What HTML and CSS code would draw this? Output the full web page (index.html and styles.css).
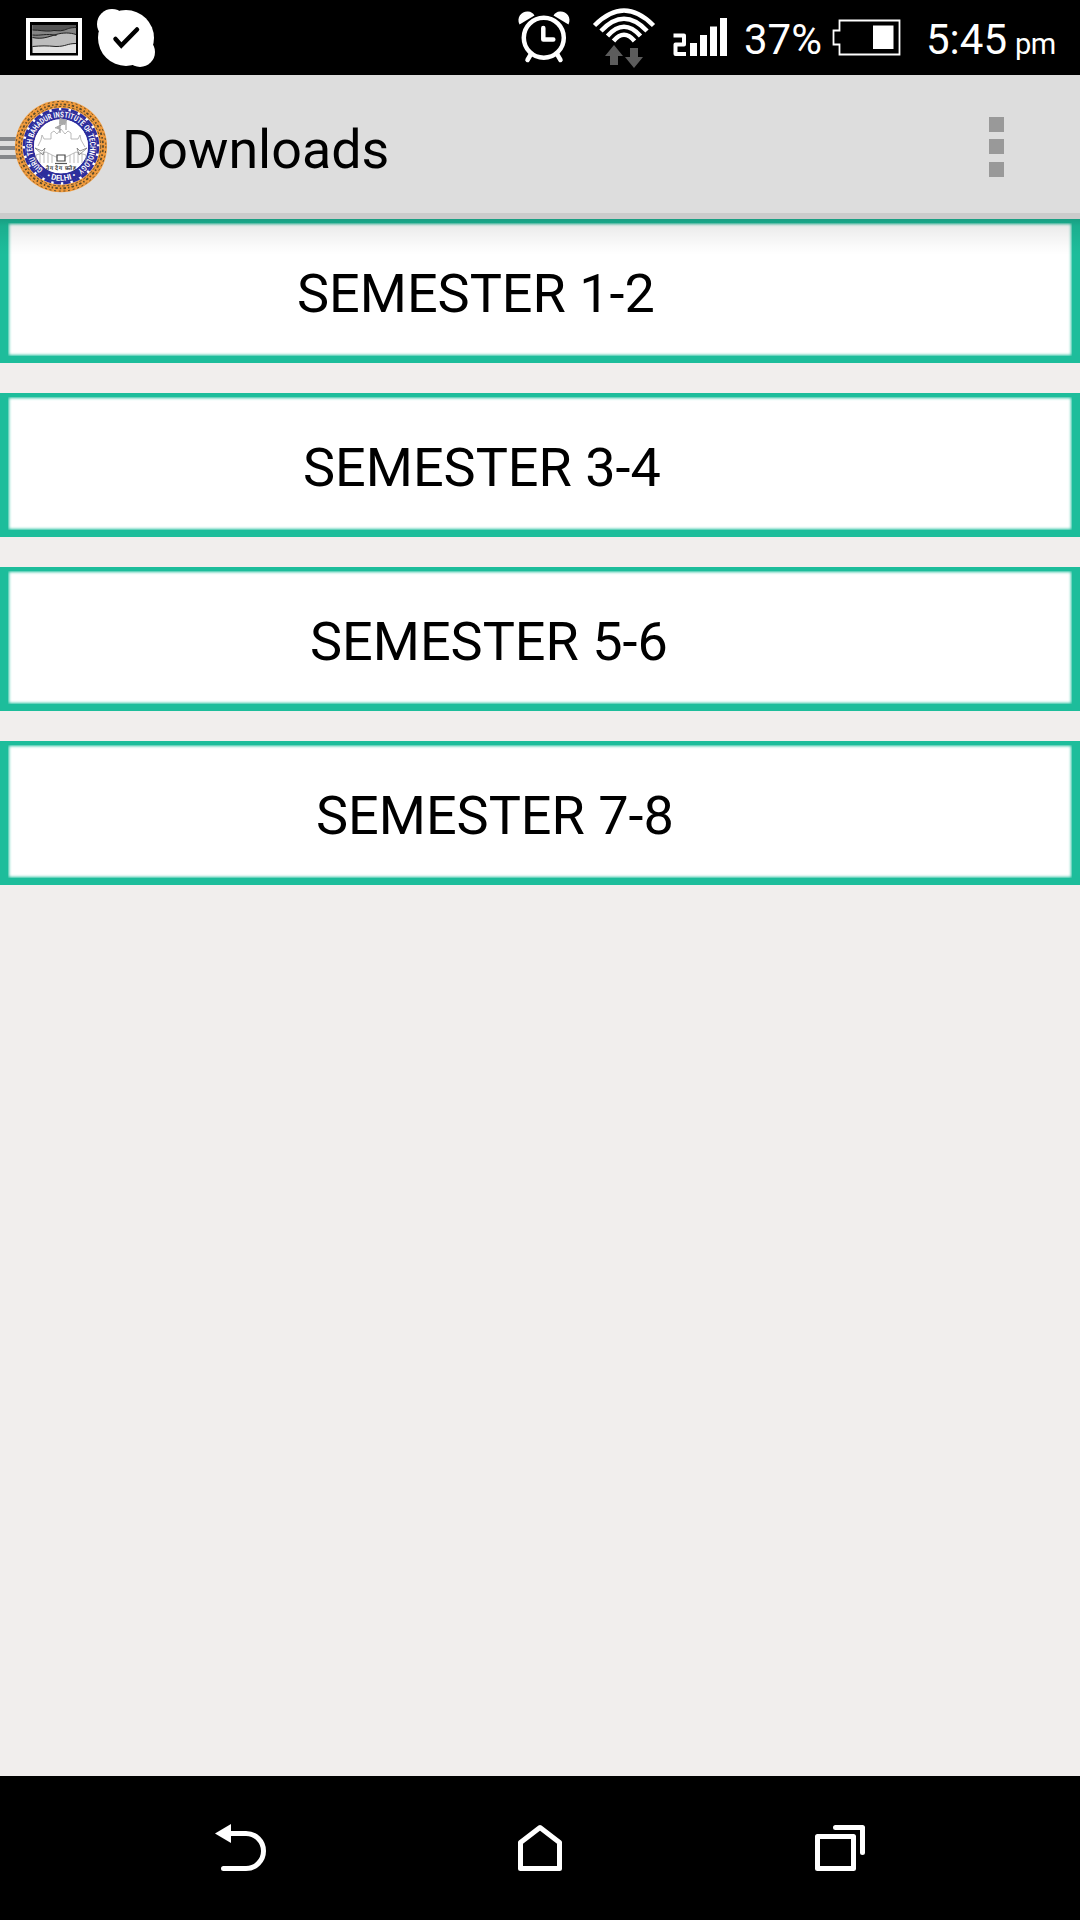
FILE: index.html
```html
<!DOCTYPE html>
<html lang="en">
<head>
<meta charset="utf-8">
<title>Downloads</title>
<link rel="stylesheet" href="styles.css">
</head>
<body>
<div class="screen">
  <header class="status">
    <svg class="notices" width="180" height="75" viewBox="0 0 180 75">
      <path fill="#fff" d="M26 18h56v42H26z"/>
      <path fill="#000" d="M30 22h48v33.500H30z"/>
      <path fill="#e3e3e3" d="M32.500 25H76v28H32.500z"/>
      <path fill="#bdbdbd" d="M32.500 25H76v18.500c-9 0-10 3-20 3-9-.8-14-.8-23.500 0z"/>
      <path fill="#858585" d="M32.500 25H76v9.500c-6-2-13-2-20 .5-8 3-14 4-23.500 3z"/>
      <path fill="#555" d="M32.500 25H76v2.500c-6 0-8 1-12 2.500-6 2-10-.5-14 1-6 .5-11-1-17.500-1z"/>
      <path fill="none" stroke="#222" d="M32.500 30c7 0 12 1.500 18 1 5-1.500 8 1 14-1 4-1.500 6-2.500 12-2.500M32.500 35c8 1 14-2 24 .5M32.500 37.500c10 2 15-.5 23.500-3 7-2 14-2 20 0M32.500 46.500c9-.8 14-.8 23.500 0 10 0 11-3 20-3"/>
      <circle cx="112" cy="24" r="15" fill="#fff"/>
      <circle cx="126" cy="38" r="28" fill="#fff"/>
      <circle cx="140" cy="52" r="15" fill="#fff"/>
      <path fill="none" stroke="#000" stroke-width="4.500" stroke-linecap="round" d="M115.500 39l5.800 6.500L137 29.500"/>
    </svg>
    <div class="indicators">
      <svg width="230" height="75" viewBox="510 0 230 75">
        <g fill="none" stroke="#fff">
          <circle cx="543.800" cy="37.800" r="20" stroke-width="4.500"/>
          <path stroke-width="4.500" stroke-linecap="round" stroke-linejoin="round" d="M543.300 28v11.500h10M531 54l-3.500 6M557 54l3.500 6"/>
        </g>
        <path fill="#fff" d="M519.500 24.500C516 17 522 11 528 11.500c3 .2 5 1.500 6.500 4zM568.500 24.500C572 17 566 11 560 11.500c-3 .2-5 1.500-6.500 4z"/>
        <g fill="none" stroke="#fff" stroke-width="4.500">
          <path d="M594.500 25.500Q624 -4.500 653.500 25.500M601 31Q624 6.500 647 31M607.500 36Q624 17.500 640.500 36M613.500 41Q624 28.500 634.500 41"/>
        </g>
        <path fill="#5c5c5c" d="M614 45l9 11h-5v9h-8v-9h-5zM634 68l-9-11h5v-9h8v9h5z"/>
        <path fill="none" stroke="#fff" stroke-width="4" stroke-linejoin="round" d="M673.500 35.500H684v9h-8.500V54H686"/>
        <path fill="#fff" d="M690 43h7v13h-7zM700 35h7v21h-7zM710 26.500h7V56h-7zM720 18h7v38h-7z"/>
      </svg>
      <span class="percent">37%</span>
      <svg class="battery" width="70" height="75" viewBox="832 0 70 75">
        <path fill="none" stroke="#fff" stroke-width="1.800" d="M840.500 20.500h60v34h-60v-10h-6v-14h6z"/>
        <path fill="#fff" d="M874 25.500h20.500v23.500H874z"/>
      </svg>
      <span class="clock">5:45</span>
      <span class="period">pm</span>
    </div>
  </header>

  <div class="bar">
    <svg class="brand" width="122" height="138" viewBox="0 75 122 138">
      <defs>
        <path id="ring-top" d="M61 175.300a29 29 0 1 1 .1 0"/>
        <path id="ring-bottom" d="M26.500 146.300a34.500 34.500 0 0 0 69 0"/>
      </defs>
      <path fill="#85878a" d="M0 137h20v4H0zM0 146h20v4H0zM0 155h20v4H0z"/>
      <circle cx="61" cy="146.300" r="46" fill="#f19b3d"/>
      <g fill="none" stroke="#5a4a2c">
        <circle cx="61" cy="146.300" r="44.800" stroke-width="1" stroke-dasharray="2 2.700"/>
        <circle cx="61" cy="146.300" r="42" stroke-width="1.800" stroke-dasharray="1.500 2 2.500 2.200"/>
        <circle cx="61" cy="146.300" r="39.700" stroke-width="1" stroke-dasharray="2.500 2"/>
      </g>
      <circle cx="61" cy="146.300" r="38.500" fill="#fff"/>
      <circle cx="61" cy="146.300" r="37" fill="none" stroke="#2d2d9c" stroke-width="2.600" stroke-dasharray="7.300 2.386"/>
      <circle cx="61" cy="146.300" r="31.500" fill="none" stroke="#2d2d9c" stroke-width="9"/>
      <circle cx="61" cy="146.300" r="27" fill="#fff"/>
      <text class="seal"><textPath href="#ring-top" startOffset="19" textLength="145" lengthAdjust="spacingAndGlyphs">GURU TEGH BAHADUR INSTITUTE OF TECHNOLOGY</textPath></text>
      <text class="seal"><textPath href="#ring-bottom" startOffset="39" textLength="31" lengthAdjust="spacingAndGlyphs">• DELHI •</textPath></text>
      <g fill="none" stroke="#aaa" stroke-width=".8">
        <path d="M38 146l3-6 1-5 2 4h7v-6l3-2 3 3 4-5 4 5 3-3 3 2v6h7l2-4 1 5 4 7M36 163v-8l10-3 10 5h10l10-5 10 3v8M40 154v9M44 153v10M48 153v10M52 155v8M70 155v8M74 153v10M78 153v10M82 154v9"/>
        <path stroke="#777" d="M35 148l7 3 3-3-2 7zM87 148l-7 3-3-3 2 7zM60 115v18M61 119l6 2M55 128l8-4M66 122v8"/>
      </g>
      <path fill="#aaa" d="M60 118l7 2-2 5-6-1zM55 128l5-3v5z"/>
      <path fill="#fff" stroke="#444" stroke-width="1.200" d="M57 155h8v6h-8z"/>
      <path stroke="#555" stroke-width="1.200" d="M55 163.500h12"/>
      <text class="motto" x="61" y="170" textLength="30">तेग देग फ़तेह</text>
    </svg>
    <h1 class="title">Downloads</h1>
    <div class="menu"><i class="dot"></i><i class="dot"></i><i class="dot"></i></div>
  </div>

  <main class="list">
    <div class="card first">SEMESTER 1-2</div>
    <div class="card second">SEMESTER 3-4</div>
    <div class="card third">SEMESTER 5-6</div>
    <div class="card fourth">SEMESTER 7-8</div>
  </main>

  <nav class="nav">
    <svg width="60" height="60" viewBox="210 1820 60 60">
      <path fill="#fff" d="M215 1833.500l16-9.500v19z"/>
      <path fill="none" stroke="#fff" stroke-width="5" stroke-linecap="round" d="M230 1833.500h16a17.500 17.500 0 0 1 0 35h-22.500"/>
    </svg>
    <svg width="60" height="60" viewBox="510 1820 60 60">
      <path fill="none" stroke="#fff" stroke-width="5" stroke-linejoin="round" d="M540 1827.500l19.500 15v26h-39v-26z"/>
    </svg>
    <svg width="60" height="60" viewBox="810 1820 60 60">
      <path fill="none" stroke="#fff" stroke-width="5" stroke-linecap="round" stroke-linejoin="round" d="M817.500 1836.500h36v32h-36zM835.500 1827.500h27v25"/>
    </svg>
  </nav>
</div>
</body>
</html>
```
FILE: styles.css
```css
* {
  box-sizing: border-box;
}

body {
  margin: 0;
  font-family: Roboto, sans-serif;
}

svg {
  display: block;
  flex: none;
}

.screen {
  display: flex;
  flex-direction: column;
  width: 1080px;
  height: 1920px;
  overflow: hidden;
  background: #f1eeed;
}

.status {
  display: flex;
  justify-content: space-between;
  flex: none;
  height: 75px;
  background: #000;
  color: #fff;
}

.indicators {
  display: flex;
  align-items: baseline;
  width: 570px;
  line-height: 80px;
  font-size: 42px;
}

.indicators svg {
  align-self: flex-start;
}

.percent {
  width: 78px;
  margin-left: 4px;
}

.battery {
  margin-left: 9px;
}

.clock {
  width: 84px;
  margin-left: 25px;
}

.period {
  margin-left: 5px;
  font-size: 29px;
  letter-spacing: -0.5px;
}

.bar {
  display: flex;
  align-items: center;
  flex: none;
  height: 144px;
  padding-right: 76px;
  background: #ddd;
  border-bottom: 6px solid #cbcbcb;
}

.seal {
  fill: #fff;
  font-size: 8px;
  font-weight: 700;
}

.motto {
  fill: #333;
  font-size: 5.5px;
  font-weight: 700;
  text-anchor: middle;
}

.title {
  flex: 1;
  margin: 0;
  padding-top: 11px;
  line-height: 64px;
  font-size: 53.8px;
  font-weight: 400;
  color: #000;
}

.menu {
  display: grid;
  row-gap: 7.5px;
  padding-top: 5px;
}

.dot {
  width: 15px;
  height: 15px;
  background: #999;
}

.list {
  position: relative;
  display: flex;
  flex: 1;
  flex-direction: column;
  gap: 30px;
}

.list::before {
  content: "";
  position: absolute;
  top: 0;
  left: 0;
  width: 100%;
  height: 36px;
  background: linear-gradient(rgba(0, 0, 0, 0.16), rgba(0, 0, 0, 0.08) 20%, rgba(0, 0, 0, 0.02) 75%, transparent);
}

.card {
  height: 144px;
  padding-top: 36px;
  border: solid #1dbd9b;
  border-width: 4px 8px 7px;
  background: #fff;
  box-shadow: inset 0 0 3px 1px #1dbd9b;
  line-height: 70px;
  font-size: 54px;
  color: #000;
}

.first {
  padding-left: 289px;
}

.second {
  padding-left: 295px;
}

.third {
  padding-left: 302px;
}

.fourth {
  padding-left: 308px;
}

.nav {
  display: flex;
  align-items: center;
  justify-content: center;
  gap: 240px;
  flex: none;
  height: 144px;
  padding-top: 4px;
  background: #000;
}
```
